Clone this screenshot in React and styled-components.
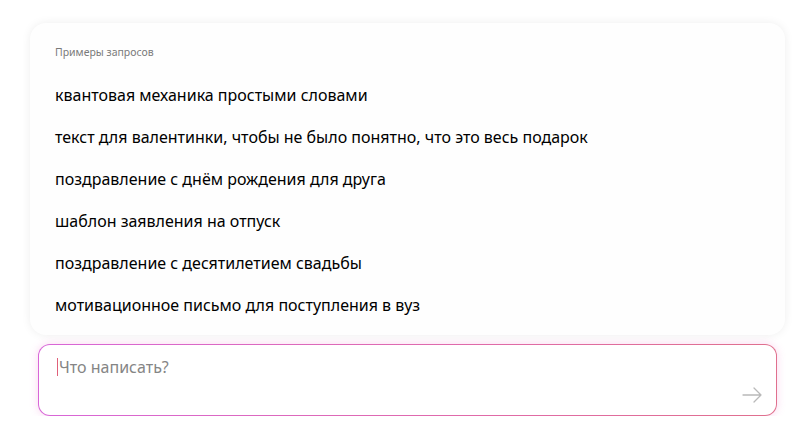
import React from "react";
import styled, { createGlobalStyle } from "styled-components";

const GlobalStyle = createGlobalStyle`
  html, body {
    margin: 0;
    background: #ffffff;
  }
  body {
    font-family: "Noto Sans", "Open Sans", Arial, sans-serif;
    color: #111;
  }
`;

const examples = [
  "квантовая механика простыми словами",
  "текст для валентинки, чтобы не было понятно, что это весь подарок",
  "поздравление с днём рождения для друга",
  "шаблон заявления на отпуск",
  "поздравление с десятилетием свадьбы",
  "мотивационное письмо для поступления в вуз",
];

const Page = styled.div`
  display: flex;
  flex-direction: column;
  gap: 9px;
  padding: 23px 15px 0 30px;
  width: 755px;
`;

const Card = styled.section`
  background: #fefefe;
  border-radius: 16px;
  box-shadow: 0 0 10px rgba(0, 0, 0, 0.07);
  padding: 21px 25px 9px;
`;

const Caption = styled.div`
  font-size: 10.5px;
  line-height: 16px;
  color: #7a7a7a;
  margin-bottom: 14px;
`;

const List = styled.ul`
  list-style: none;
  margin: 0;
  padding: 0;
`;

const Item = styled.li`
  font-size: 16px;
  line-height: 42px;
  color: #000;
  cursor: pointer;
  white-space: nowrap;
`;

const InputBox = styled.div`
  position: relative;
  margin: 0 8px;
  height: 72px;
  box-sizing: border-box;
  border-radius: 12px;
  border: 1px solid transparent;
  background:
    linear-gradient(#fff, #fff) padding-box,
    linear-gradient(90deg, #d866d8, #e06aa8 60%, #e0708e) border-box;
  box-shadow: 0 0 8px rgba(240, 110, 200, 0.28);
  padding: 10px 18px;
`;

const Placeholder = styled.div`
  display: flex;
  align-items: center;
  font-size: 16px;
  line-height: 24px;
  color: #858585;
`;

const Caret = styled.span`
  display: inline-block;
  width: 1px;
  height: 18px;
  background: #e0607a;
  margin-right: 1px;
`;

const SendButton = styled.button`
  position: absolute;
  right: 13px;
  bottom: 12px;
  border: none;
  background: none;
  padding: 0;
  width: 22px;
  height: 16px;
  cursor: pointer;
`;

const ArrowIcon = () => (
  <svg width="22" height="16" viewBox="0 0 22 16" fill="none">
    <path
      d="M2 8h18M13 1l7 7-7 7"
      stroke="#b9b9b9"
      strokeWidth="1.3"
      strokeLinecap="round"
      strokeLinejoin="round"
    />
  </svg>
);

export default function App() {
  return (
    <>
      <GlobalStyle />
      <Page>
        <Card>
          <Caption>Примеры запросов</Caption>
          <List>
            {examples.map((text) => (
              <Item key={text}>{text}</Item>
            ))}
          </List>
        </Card>
        <InputBox>
          <Placeholder>
            <Caret />
            Что написать?
          </Placeholder>
          <SendButton aria-label="Отправить">
            <ArrowIcon />
          </SendButton>
        </InputBox>
      </Page>
    </>
  );
}
